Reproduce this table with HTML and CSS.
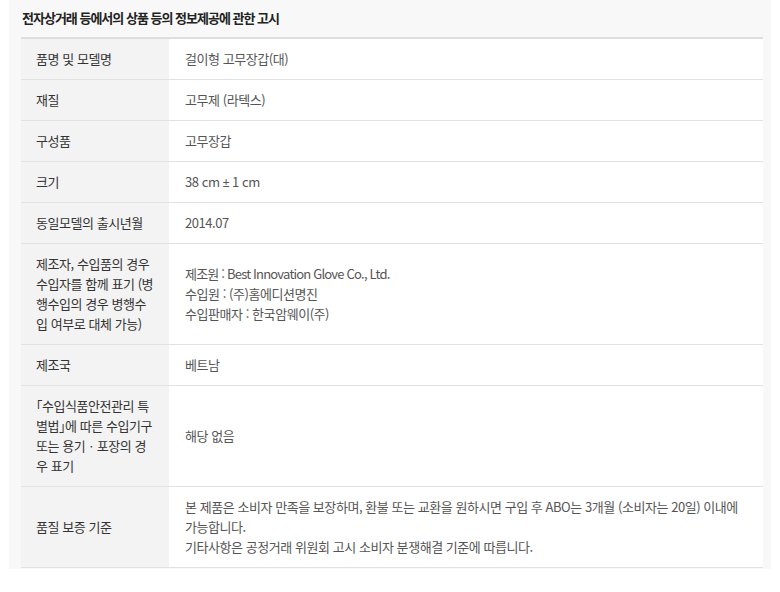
FILE: index.html
```html
<!DOCTYPE html>
<html lang="ko">
<head>
<meta charset="utf-8">
<title>상품정보제공 고시</title>
<link rel="stylesheet" href="styles.css">
</head>
<body>
<section class="panel">
  <h2 class="title">전자상거래 등에서의 상품 등의 정보제공에 관한 고시</h2>
  <table class="notice">
    <tbody>
      <tr><th>품명 및 모델명</th><td>걸이형 고무장갑(대)</td></tr>
      <tr><th>재질</th><td>고무제 (라텍스)</td></tr>
      <tr><th>구성품</th><td>고무장갑</td></tr>
      <tr><th>크기</th><td>38 cm <span class="sym">±</span> 1 cm</td></tr>
      <tr><th>동일모델의 출시년월</th><td>2014.07</td></tr>
      <tr><th>제조자, 수입품의 경우 수입자를 함께 표기 (병행수입의 경우 병행수입 여부로 대체 가능)</th><td><span class="latin">제조원 : Best Innovation Glove Co., Ltd.</span><br>수입원 : (주)홈에디션명진<br>수입판매자 : 한국암웨이(주)</td></tr>
      <tr><th>제조국</th><td>베트남</td></tr>
      <tr><th>｢수입식품안전관리 특별법｣에 따른 수입기구 또는 용기ㆍ포장의 경우 표기</th><td>해당 없음</td></tr>
      <tr><th>품질 보증 기준</th><td>본 제품은 소비자 만족을 보장하며, 환불 또는 교환을 원하시면 구입 후 ABO는 3개월 (소비자는 20일) 이내에<br>가능합니다.<br>기타사항은 공정거래 위원회 고시 소비자 분쟁해결 기준에 따릅니다.</td></tr>
    </tbody>
  </table>
</section>
</body>
</html>
```
FILE: styles.css
```css
html, body {
  margin: 0;
  padding: 0;
  background: #ffffff;
}

body {
  font-family: "Noto Sans CJK KR", "Noto Sans", sans-serif;
}

.panel {
  margin: 0 9px;
  padding: 8px 8px 1px 12px;
  background: #f8f8f8;
}

.title {
  margin: 0 0 9px 1px;
  font-size: 13px;
  line-height: 20px;
  font-weight: 700;
  letter-spacing: -1px;
  color: #222222;
}

.notice {
  width: 100%;
  border-collapse: collapse;
  border-top: 2px solid #dedede;
  background: #ffffff;
}

.notice th,
.notice td {
  padding: 10px 12px 10px 15px;
  font-size: 13px;
  line-height: 20px;
  letter-spacing: -0.45px;
  font-weight: 400;
  text-align: left;
  vertical-align: middle;
  border-bottom: 1px solid #e2e2e2;
}

.notice th {
  width: 121px;
  background: #f3f3f3;
  color: #333333;
}

.notice td {
  padding-left: 16px;
  color: #555555;
}

.notice .latin {
  letter-spacing: -0.8px;
}

.notice .sym {
  font-family: "Liberation Sans", sans-serif;
  font-size: 12px;
  line-height: 10px;
}
```
